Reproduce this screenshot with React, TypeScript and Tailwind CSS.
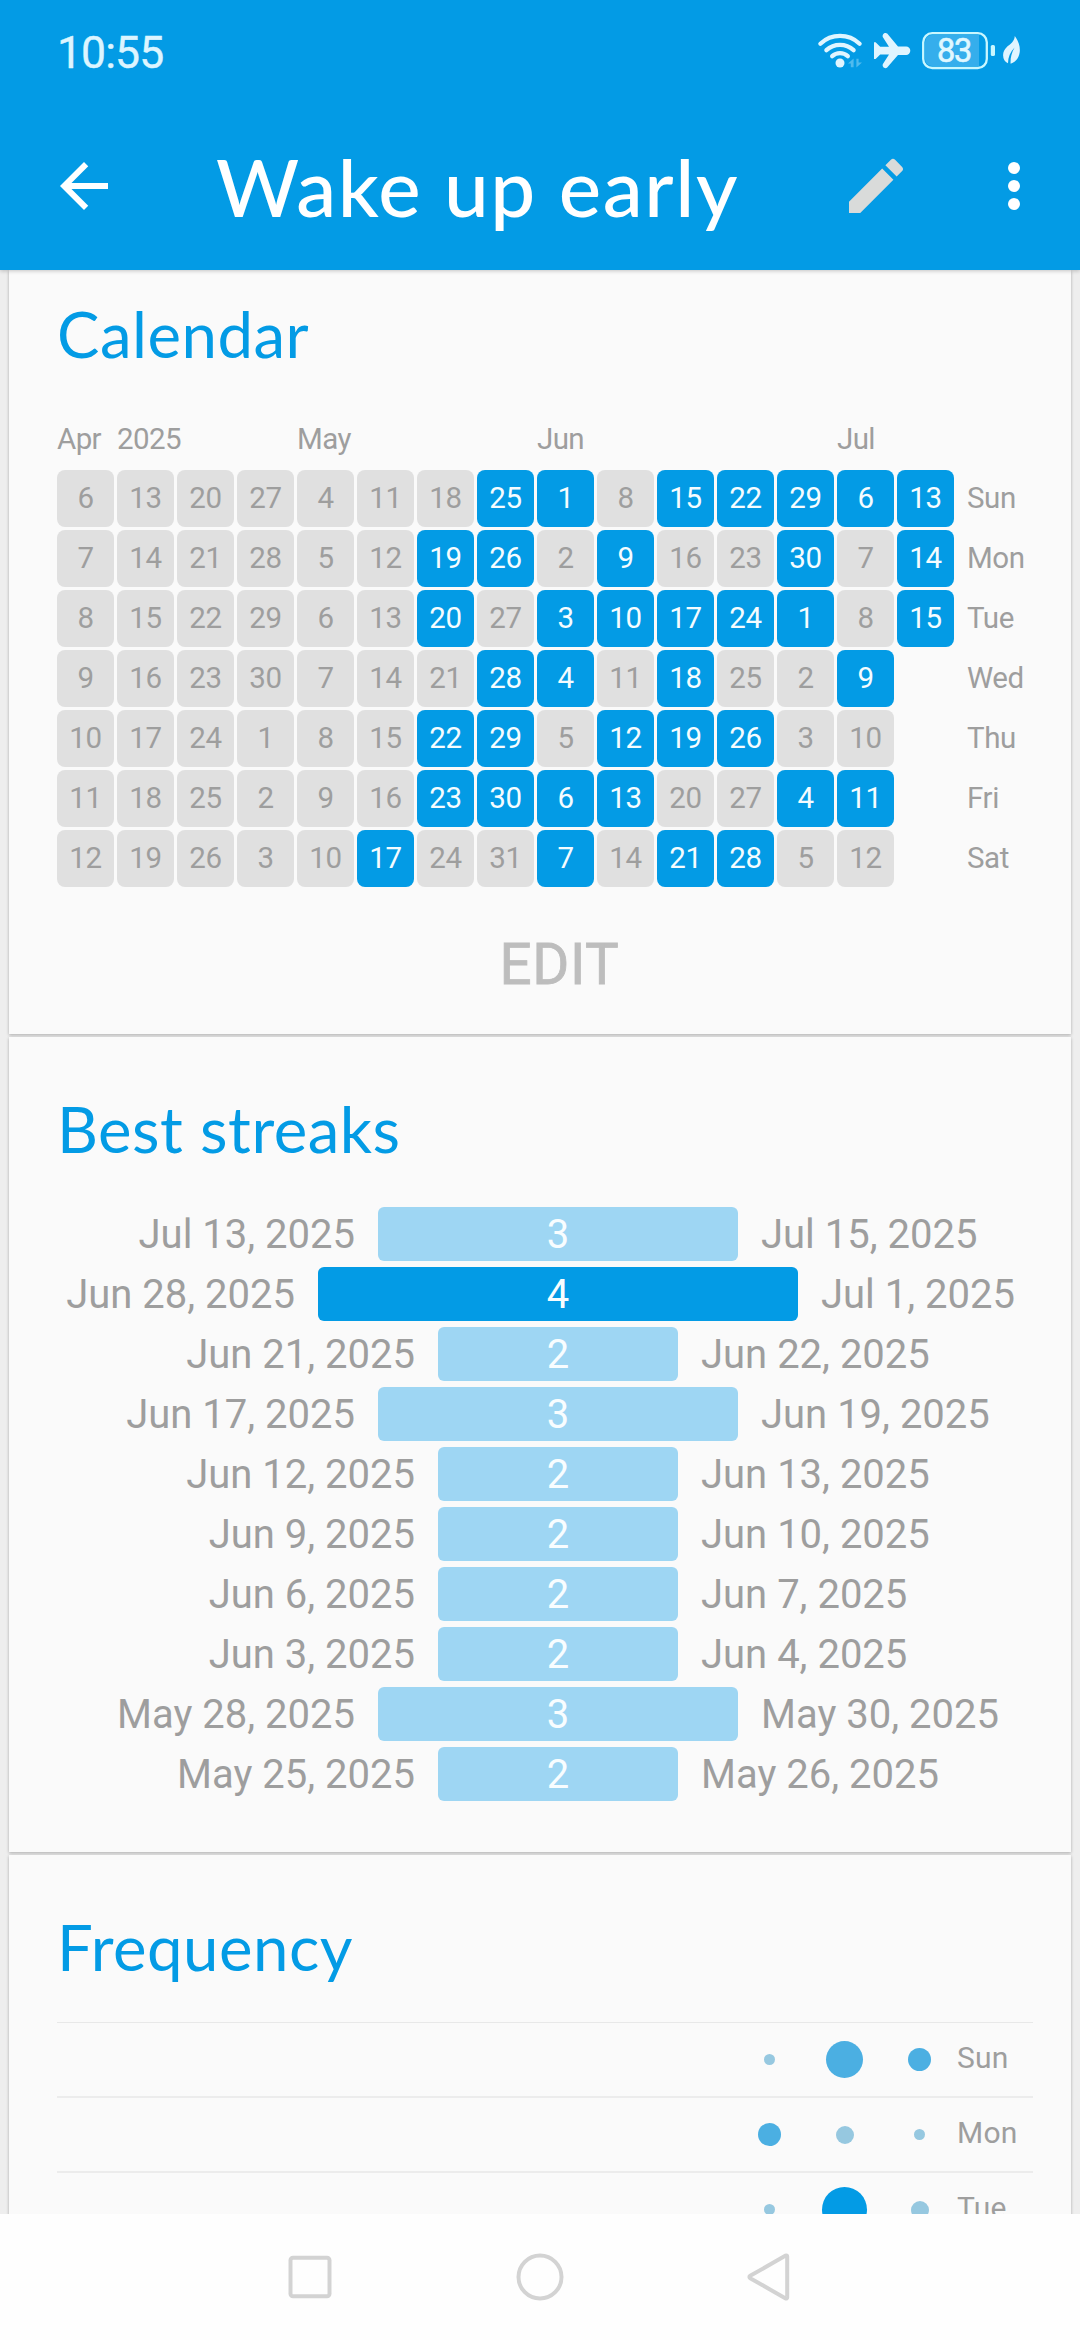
import React from "react";

type Week = { label?: string; days: number[]; done: number[] };

// Each week runs Sunday to Saturday; `done` holds the weekday indexes that are checked.
const WEEKS: Week[] = [
  { label: "Apr", days: [6, 7, 8, 9, 10, 11, 12], done: [] },
  { label: "2025", days: [13, 14, 15, 16, 17, 18, 19], done: [] },
  { days: [20, 21, 22, 23, 24, 25, 26], done: [] },
  { days: [27, 28, 29, 30, 1, 2, 3], done: [] },
  { label: "May", days: [4, 5, 6, 7, 8, 9, 10], done: [] },
  { days: [11, 12, 13, 14, 15, 16, 17], done: [6] },
  { days: [18, 19, 20, 21, 22, 23, 24], done: [1, 2, 4, 5] },
  { days: [25, 26, 27, 28, 29, 30, 31], done: [0, 1, 3, 4, 5] },
  { label: "Jun", days: [1, 2, 3, 4, 5, 6, 7], done: [0, 2, 3, 5, 6] },
  { days: [8, 9, 10, 11, 12, 13, 14], done: [1, 2, 4, 5] },
  { days: [15, 16, 17, 18, 19, 20, 21], done: [0, 2, 3, 4, 6] },
  { days: [22, 23, 24, 25, 26, 27, 28], done: [0, 2, 4, 6] },
  { days: [29, 30, 1, 2, 3, 4, 5], done: [0, 1, 2, 5] },
  { label: "Jul", days: [6, 7, 8, 9, 10, 11, 12], done: [0, 3, 5] },
  { days: [13, 14, 15], done: [0, 1, 2] },
];

const WEEKDAYS = ["Sun", "Mon", "Tue", "Wed", "Thu", "Fri", "Sat"];

const STREAKS: [string, number, string][] = [
  ["Jul 13, 2025", 3, "Jul 15, 2025"],
  ["Jun 28, 2025", 4, "Jul 1, 2025"],
  ["Jun 21, 2025", 2, "Jun 22, 2025"],
  ["Jun 17, 2025", 3, "Jun 19, 2025"],
  ["Jun 12, 2025", 2, "Jun 13, 2025"],
  ["Jun 9, 2025", 2, "Jun 10, 2025"],
  ["Jun 6, 2025", 2, "Jun 7, 2025"],
  ["Jun 3, 2025", 2, "Jun 4, 2025"],
  ["May 28, 2025", 3, "May 30, 2025"],
  ["May 25, 2025", 2, "May 26, 2025"],
];

const BAR: Record<number, string> = {
  2: "w-[240px] bg-[#9ed6f3]",
  3: "w-[360px] bg-[#9ed6f3]",
  4: "w-[480px] bg-[#039be5]",
};

const DOT: Record<number, string> = {
  1: "size-[11px] bg-[#96c8e0]",
  2: "size-[18px] bg-[#96c8e0]",
  3: "size-[23px] bg-[#4bafe2]",
  4: "size-[37px] bg-[#4bafe2]",
  5: "size-[45px] bg-[#039be5]",
};

const FREQUENCY: [string, number[]][] = [
  ["Sun", [1, 4, 3]],
  ["Mon", [3, 2, 1]],
  ["Tue", [1, 5, 2]],
];

function StatusIcons() {
  return (
    <svg className="h-[102px] w-[212px]" viewBox="814 0 212 102" fill="none">
      <g stroke="#e0f5ff" strokeWidth="4.3" strokeLinecap="round">
        <path d="M820.4 43.7a28.5 28.5 0 0 1 39.2 0" />
        <path d="M826.4 50.2a20 20 0 0 1 27.2 0" />
        <path d="M832.2 56.2a11.6 11.6 0 0 1 15.6 0" />
      </g>
      <circle cx="840" cy="63" r="4.5" fill="#e0f5ff" />
      <path d="M848 63.5l5.6-5v8.8h-2.8v-3.8zM862 62.5l-5.6 5v-8.8h2.2v3.8z" fill="#e0f5ff" opacity=".35" />
      <path
        d="M874 42.3h1.6l4.6 4.5h8.8L882.9 37.200c-1.200-2.600 1.900-5.400 4.300-3.600L898 46.500h8.100a4.200 4.200 0 0 1 0 8.400H898L887.200 67.600c-2.400 1.800-5.500-1-4.300-3.600l6.100-9.400h-8.800l-4.600 4.400H874z"
        fill="#e0f5ff"
      />
      <path d="M932 35h47v31h-47a7 7 0 0 1-7-7V42a7 7 0 0 1 7-7z" fill="#35aeec" />
      <rect x="923.2" y="33.200" width="63.600" height="34.800" rx="9" stroke="#c9f7ff" strokeWidth="2.300" />
      <rect x="990.800" y="45" width="4.200" height="11" rx="1.600" fill="#c9f7ff" />
      <path
        d="M1014.800 36c3.800 5 5.600 10.800 4.900 16.200-.7 5.600-4.400 10.300-9.100 11.600-.3-5 .6-10.400 4-16.200-4.400 4.700-6.500 9.700-6.600 15.600-3.200-1.300-5-4.300-4.900-8.200.2-6.800 5.800-9.200 8.900-12.500 1.700-1.800 2.600-3.800 2.800-6.500z"
        fill="#e0f5ff"
      />
    </svg>
  );
}

function Header() {
  return (
    <header className="relative z-10 h-[270px] bg-[#039be5] shadow-[0_1px_4px_rgba(0,0,0,0.22)]">
      <div className="flex h-[102px] items-center justify-between pr-[54px] pl-[57px]">
        <span className="pt-[3px] text-[44.500px] leading-[60px] tracking-[-0.9px] text-[#dcf5ff] [-webkit-text-stroke:0.4px_#dcf5ff]">
          10:55
        </span>
        <div className="relative">
          <StatusIcons />
          <span className="absolute top-[35px] left-[123px] text-[32.5px] leading-[32px] tracking-[-1.2px] text-[#e0f8ff] [-webkit-text-stroke:0.6px_#e0f8ff]">
            83
          </span>
        </div>
      </div>
      <div className="flex h-[168px] items-center pr-[30px] pl-12">
        <svg className="size-[72px]" viewBox="0 0 24 24" fill="#fff">
          <path d="M20 11H7.830l5.590-5.590L12 4l-8 8 8 8 1.410-1.410L7.830 13H20v-2z" />
        </svg>
        <h1 className="ml-24 flex-1 font-['Lato',sans-serif] text-[80px] leading-[100px] font-medium tracking-[1.6px] whitespace-nowrap text-white">
          Wake up early
        </h1>
        <svg className="size-[72px]" viewBox="0 0 24 24" fill="#d9dbda">
          <path d="M3 17.250V21h3.750L17.810 9.940l-3.750-3.750L3 17.250zM20.710 7.040c.39-.39.39-1.020 0-1.410l-2.340-2.340a.996.996 0 0 0-1.410 0l-1.830 1.830 3.750 3.750 1.830-1.830z" />
        </svg>
        <svg className="ml-[66px] size-[72px]" viewBox="0 0 24 24" fill="#fff">
          <circle cx="12" cy="6" r="2" />
          <circle cx="12" cy="12" r="2" />
          <circle cx="12" cy="18" r="2" />
        </svg>
      </div>
    </header>
  );
}

function Title({ children }: { children: string }) {
  return (
    <h2 className="pt-px font-['Lato',sans-serif] text-[63.500px] leading-[71px] tracking-[0.5px] text-[#039be5]">
      {children}
    </h2>
  );
}

function CalendarCard() {
  return (
    <section className="h-[764px] bg-[#fafafa] pt-[27px] pr-3 pl-12 shadow-[0_1px_3px_rgba(0,0,0,0.28)]">
      <Title>Calendar</Title>
      <div className="mt-[50px] flex gap-[3px] text-[29.500px] leading-10 tracking-[-0.6px]">
        {WEEKS.map((w, i) => (
          <span key={i} className="w-[57px] whitespace-nowrap">
            {w.label}
          </span>
        ))}
      </div>
      <div className="mt-[11px] flex gap-[3px] text-[29.500px] leading-[57px]">
        {WEEKS.map((w, i) => (
          <div key={i} className="flex w-[57px] flex-col gap-[3px] text-center tracking-[-0.4px]">
            {w.days.map((d, j) => (
              <div
                key={j}
                className={
                  w.done.includes(j)
                    ? "h-[57px] rounded-[8px] bg-[#039be5] text-[#f4fcff]"
                    : "h-[57px] rounded-[8px] bg-[#e0e0e0]"
                }
              >
                {d}
              </div>
            ))}
          </div>
        ))}
        <div className="ml-[10px] flex flex-col gap-[3px] tracking-[-0.4px]">
          {WEEKDAYS.map((d) => (
            <span key={d} className="h-[57px]">
              {d}
            </span>
          ))}
        </div>
      </div>
      <div className="mt-[48px] pl-[3px] text-center text-[56.500px] leading-[60px] tracking-[0.6px] text-[#bdbdbd] [-webkit-text-stroke:0.8px_#bdbdbd]">
        EDIT
      </div>
    </section>
  );
}

function StreaksCard() {
  return (
    <section className="mt-[3px] h-[815px] bg-[#fafafa] pt-[55px] pr-3 pl-12 shadow-[0_1px_3px_rgba(0,0,0,0.28)]">
      <Title>Best streaks</Title>
      <div className="mt-[43px] flex flex-col gap-1.5 text-[40px] leading-[56px]">
        {STREAKS.map(([from, n, to]) => (
          <div key={from} className="flex h-[54px] gap-[23px] whitespace-nowrap">
            <span className="flex-1 basis-0 text-right">{from}</span>
            <span className={`${BAR[n]} rounded-[6px] text-center text-[#f8fdff]`}>{n}</span>
            <span className="flex-1 basis-0">{to}</span>
          </div>
        ))}
      </div>
    </section>
  );
}

function FrequencyCard() {
  return (
    <section className="mt-[3px] h-[600px] bg-[#fafafa] pt-[55px] pl-12 shadow-[0_1px_3px_rgba(0,0,0,0.28)]">
      <Title>Frequency</Title>
      <div className="mt-[40px] w-[976px] text-[30px] tracking-[0.2px]">
        {FREQUENCY.map(([day, sizes], i) => (
          <div
            key={day}
            className={
              i === 0
                ? "flex h-[74px] items-center justify-end border-t border-[#e8e8e8]"
                : "flex h-[75px] items-center justify-end border-t-2 border-[#ececec]"
            }
          >
            {sizes.map((s, j) => (
              <span key={j} className="flex w-[75px] justify-center">
                <span className={`${DOT[s]} rounded-full`} />
              </span>
            ))}
            <span className="-mt-1 w-[76px]">{day}</span>
          </div>
        ))}
      </div>
    </section>
  );
}

function NavBar() {
  return (
    <nav className="flex h-[126px] items-center justify-center gap-[166px] bg-[#fefefe]">
      <svg className="size-16" viewBox="0 0 64 64" fill="none" stroke="#d3d3d3" strokeWidth="4">
        <rect x="12.500" y="12.700" width="39" height="38.600" rx="2.500" />
      </svg>
      <svg className="size-16" viewBox="0 0 64 64" fill="none" stroke="#d3d3d3" strokeWidth="4">
        <circle cx="32" cy="32" r="21.500" />
      </svg>
      <svg className="size-16" viewBox="0 0 64 64" fill="none" stroke="#d3d3d3" strokeWidth="4" strokeLinejoin="round">
        <path d="M49.200 11.400v41.200c0 .8-.8 1.200-1.500.8L12.200 33.200c-1.100-.7-1.100-1.700 0-2.400L47.700 10.600c.7-.4 1.500 0 1.500.8z" />
      </svg>
    </nav>
  );
}

export default function App() {
  return (
    <div className="flex h-[2340px] w-[1080px] flex-col overflow-hidden bg-[#eeeeee] font-['Roboto',sans-serif] text-[#9e9e9e]">
      <Header />
      <main className="min-h-0 flex-1 overflow-hidden px-[9px]">
        <CalendarCard />
        <StreaksCard />
        <FrequencyCard />
      </main>
      <NavBar />
    </div>
  );
}
